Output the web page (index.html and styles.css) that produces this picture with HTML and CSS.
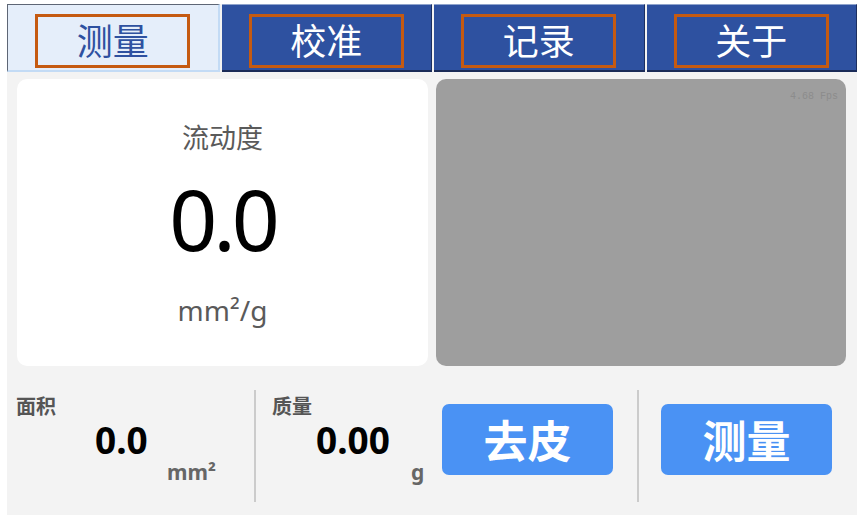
FILE: index.html
```html
<!DOCTYPE html>
<html lang="zh-CN">
<head>
  <meta charset="UTF-8" />
  <meta name="viewport" content="width=device-width, initial-scale=1.0" />
  <title>流动度测量</title>
  <link rel="stylesheet" href="styles.css">
</head>
<body>
  <div class="app">
    <div class="tabs">
      <div class="tab active"><span class="tab-box">测量</span></div>
      <div class="tab"><span class="tab-box">校准</span></div>
      <div class="tab"><span class="tab-box">记录</span></div>
      <div class="tab"><span class="tab-box">关于</span></div>
    </div>

    <div class="main">
      <div class="result-card">
        <div class="result-title">流动度</div>
        <div class="result-value">0.0</div>
        <div class="result-unit">mm²/g</div>
      </div>
      <div class="camera">
        <span class="fps">4.68 Fps</span>
      </div>
    </div>

    <div class="bottom">
      <div class="cell cell-area">
        <div class="cell-label">面积</div>
        <div class="cell-value">0.0</div>
        <div class="cell-unit">mm²</div>
      </div>
      <div class="divider"></div>
      <div class="cell cell-mass">
        <div class="cell-label">质量</div>
        <div class="cell-value">0.00</div>
        <div class="cell-unit">g</div>
      </div>
      <button class="action" id="tare-btn">去皮</button>
      <div class="divider divider-btn"></div>
      <button class="action" id="measure-btn">测量</button>
    </div>
  </div>
</body>
</html>
```

FILE: styles.css
```css
body {
  margin: 0;
  background: #fff;
  font-family: "Noto Sans", "Noto Sans CJK SC", sans-serif;
}

.app {
  margin: 4px 0 0 7px;
  width: 850px;
  height: 511px;
  background: #f3f3f3;
  display: flex;
  flex-direction: column;
}

/* top tab bar */
.tabs {
  display: flex;
  gap: 2px;
  height: 68px;
}

.tab {
  flex: 1;
  box-sizing: border-box;
  background: #2e51a0;
  border-top: 1px solid #8fa3cc;
  border-right: 1px solid #1c2f60;
  border-bottom: 2px solid #1a2b57;
  display: flex;
  justify-content: center;
  padding-top: 9px;
}

.tab.active {
  background: #e5eefa;
  border: 2px solid #c3dbf5;
  border-top: 1px solid #5e6675;
  border-left: 1px solid #5e6675;
}

.tab-box {
  box-sizing: border-box;
  width: 155px;
  height: 54px;
  border: 3px solid #c55a11;
  color: #fff;
  font-family: "Noto Sans CJK SC", sans-serif;
  font-size: 36px;
  line-height: 44px;
  text-align: center;
}

.tab.active .tab-box {
  color: #2e51a0;
}

/* result + camera */
.main {
  display: flex;
  gap: 8px;
  padding: 7px 0 0 10px;
}

.result-card {
  width: 411px;
  height: 287px;
  background: #fff;
  border-radius: 10px;
  text-align: center;
}

.result-title {
  margin-top: 42px;
  font-family: "Noto Sans CJK SC", sans-serif;
  font-size: 27px;
  line-height: 32px;
  color: #5a5a5a;
}

.result-value {
  margin-top: 24px;
  font-size: 84px;
  line-height: 84px;
  letter-spacing: -4px;
  color: #000;
}

.result-unit {
  margin-top: 33px;
  font-size: 28px;
  line-height: 32px;
  color: #5a5a5a;
}

.camera {
  width: 410px;
  height: 287px;
  background: #9e9e9e;
  border-radius: 10px;
  display: flex;
  justify-content: flex-end;
  align-items: flex-start;
  padding: 12px 8px 0 0;
  box-sizing: border-box;
}

.fps {
  font-family: "Liberation Mono", monospace;
  font-size: 10px;
  color: #8c8c8c;
}

/* bottom readings + buttons */
.bottom {
  display: flex;
  align-items: flex-start;
  padding-top: 24px;
}

.cell {
  box-sizing: border-box;
  padding-top: 4px;
  font-weight: bold;
}

.cell-area {
  width: 247px;
  padding-left: 9px;
}

.cell-mass {
  width: 186px;
  padding-left: 16px;
}

.cell-label {
  font-family: "Noto Sans CJK SC", sans-serif;
  font-size: 20px;
  line-height: 24px;
  color: #555;
}

.cell-value {
  margin-top: 2px;
  font-size: 37px;
  line-height: 40px;
  color: #000;
}

.cell-unit {
  font-size: 21px;
  line-height: 24px;
  color: #666;
}

.cell-area .cell-value { padding-left: 79px; }
.cell-area .cell-unit { padding-left: 151px; }
.cell-mass .cell-value { padding-left: 44px; }
.cell-mass .cell-unit { padding-left: 139px; }

.divider {
  width: 2px;
  height: 112px;
  background: #cbcbcb;
}

.divider-btn {
  margin: 0 22px 0 24px;
}

.action {
  margin-top: 14px;
  width: 171px;
  height: 71px;
  border: none;
  border-radius: 7px;
  background: #4a92f4;
  color: #fff;
  font-family: "Noto Sans CJK SC", sans-serif;
  font-weight: bold;
  font-size: 44px;
  line-height: 71px;
  padding: 0;
}
```
